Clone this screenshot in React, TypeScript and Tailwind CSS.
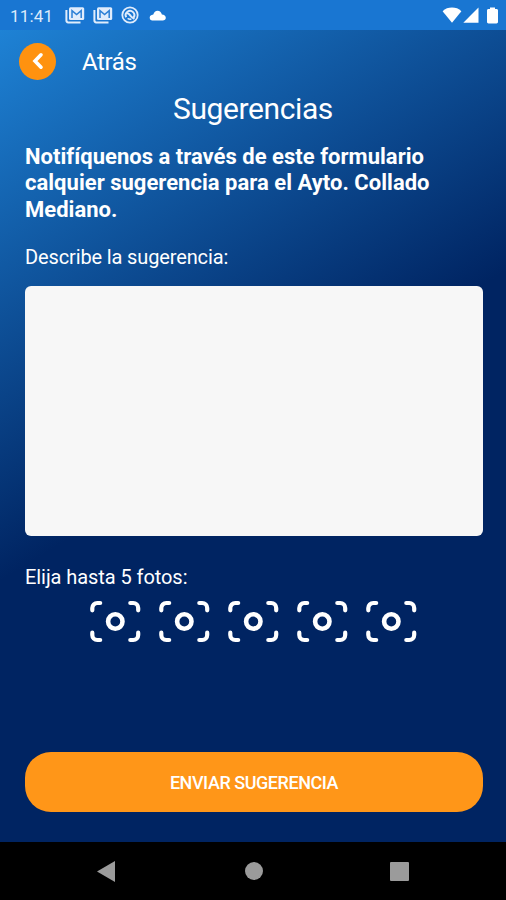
import React, { useState } from 'react';
import { clsx } from 'clsx';

const PHOTO_SLOTS = [1, 2, 3, 4, 5];

function MailIcon() {
  return (
    <svg viewBox="0 0 20 18" className="w-5 h-[18px]" fill="none">
      <path d="M1.4 4v10.600c0 1.100.7 1.800 1.800 1.800H15.500" stroke="#e0ecfc" strokeWidth="2" />
      <rect x="4" y="1.200" width="15.200" height="12.800" rx="1.500" fill="#e0ecfc" />
      <path d="M7 12V4.600l4.600 3.900 4.600-3.900V12" stroke="#2d80d6" strokeWidth="1.500" />
    </svg>
  );
}

function CircleIcon() {
  return (
    <svg viewBox="0 0 18 18" className="w-[18px] h-[18px]" fill="none" stroke="#e0ecfc">
      <circle cx="9" cy="9" r="7.700" strokeWidth="1.800" />
      <path d="M5.200 11.200a4.300 4.300 0 1 1 7.200.6" strokeWidth="2" />
      <path d="M5.800 7.200c2.400-.6 3.200 2.200 4.400 3.400 1 1 2 1.600 3.200 2.200" strokeWidth="2" />
      <path d="M6.600 12.400c1.200.8 2.400 1 3.800.6" strokeWidth="1.400" />
    </svg>
  );
}

function CloudIcon() {
  return (
    <svg viewBox="0 0 17 11" className="ml-[2px] w-[17px] h-[11px]" fill="#fff">
      <path d="M3 10.600a2.900 2.900 0 0 1-.4-5.600c.7-.2 1.300-.2 1.700-.4C5 2.200 6.500.7 8.500.7c2.300 0 3.800 1.600 4.400 3.900 2.300.2 3.900 1.400 3.900 3.200 0 1.700-1.300 2.800-3 2.800z" />
    </svg>
  );
}

function StatusBar() {
  return (
    <div className="flex h-[30px] shrink-0 items-center bg-[#1976d2] pl-[10px] pr-[8px] text-white">
      <span className="w-[55px] pt-[2px] text-[17px] leading-none tracking-[0.2px] text-[#dceafb]">
        11:41
      </span>
      <div className="flex items-center gap-[8px]">
        <MailIcon />
        <MailIcon />
        <CircleIcon />
        <CloudIcon />
      </div>
      <div className="ml-auto flex items-center">
        <svg viewBox="0 0 20 16" className="w-5 h-4" fill="#fff">
          <path d="M10 15.800.6 4.200C3.200 1.700 6.400.6 10 .6s6.800 1.100 9.400 3.600z" />
        </svg>
        <svg viewBox="0 0 16 16" className="ml-px w-4 h-4" fill="#fff">
          <path d="M15.500.4v15.400H.3z" />
        </svg>
        <svg viewBox="0 0 11 17" className="ml-[8px] w-[11px] h-[17px]" fill="#fff">
          <path d="M3 .500h5v1.500h1.500c.8 0 1.500.6 1.500 1.400v11.700c0 .8-.7 1.400-1.500 1.400h-8c-.8 0-1.500-.6-1.500-1.400V3.400C0 2.600.7 2 1.500 2H3z" />
        </svg>
      </div>
    </div>
  );
}

function PhotoSlot({ slot }: { slot: number }) {
  return (
    <button type="button" aria-label={`Foto ${slot}`}>
      <svg
        viewBox="0 0 52 43"
        className="w-[52px] h-[43px]"
        fill="none"
        stroke="#fff"
        strokeWidth="4.200"
        strokeLinecap="round"
      >
        <path d="M3.300 10.300V8a5 5 0 0 1 5-5h2.900" />
        <path d="M41.300 3h2.900a5 5 0 0 1 5 5v2.300" />
        <path d="M3.300 32.700V35a5 5 0 0 0 5 5h2.900" />
        <path d="M41.300 40h2.900a5 5 0 0 0 5-5v-2.300" />
        <circle cx="26.300" cy="21.500" r="7.200" strokeWidth="4.600" />
      </svg>
    </button>
  );
}

function NavigationBar() {
  return (
    <div className="flex h-[58px] shrink-0 items-center bg-black pl-[97px]">
      <svg viewBox="0 0 18 21" className="w-[18px] h-[21px]" fill="#9b9b9b">
        <path d="M18 0v21L0 10.500z" />
      </svg>
      <div className="ml-[130px] size-[18px] rounded-full bg-[#9b9b9b]" />
      <div className="ml-[127px] size-[19px] rounded-[1px] bg-[#9b9b9b]" />
    </div>
  );
}

export default function App() {
  const [text, setText] = useState('');

  return (
    <div className="flex h-[900px] w-[506px] flex-col overflow-hidden font-[Roboto,sans-serif] text-white">
      <StatusBar />

      <main
        className={clsx(
          'flex flex-1 flex-col',
          'bg-[linear-gradient(148.500deg,#1e82d5_0px,#002462_470px)]'
        )}
      >
        {/* Back navigation */}
        <header className="flex h-[62px] items-center pl-[19px]">
          <button
            type="button"
            aria-label="Atrás"
            className="flex size-[37px] items-center justify-center rounded-full bg-[#ff920f]"
          >
            <svg viewBox="0 0 12 18" className="w-3 h-[18px]" fill="none">
              <path d="M9 2.800 3 9l6 6.200" stroke="#fff" strokeWidth="3.600" strokeLinecap="round" />
            </svg>
          </button>
          <span className="ml-[26px] pt-[2px] text-[24px] leading-none tracking-[-0.4px]">Atrás</span>
        </header>

        <h1 className="text-center text-[30px] leading-[34px] tracking-[-0.4px]">Sugerencias</h1>

        <div className="flex flex-1 flex-col px-[25px]">
          <p className="mt-[18px] text-[22px] font-bold leading-[26.300px] tracking-[0.02px]">
            Notifíquenos a través de este formulario calquier sugerencia para el Ayto. Collado Mediano.
          </p>

          <label
            htmlFor="suggestion"
            className="mt-[22px] text-[20px] leading-[24px] tracking-[-0.130px]"
          >
            Describe la sugerencia:
          </label>
          <textarea
            id="suggestion"
            value={text}
            onChange={(e) => setText(e.target.value)}
            className="mt-[17px] h-[250px] w-[458px] resize-none rounded-[6px] bg-[#f7f7f7] p-3 text-[20px] text-black outline-none"
          />

          <p className="mt-[29px] text-[20px] leading-[24px] tracking-[-0.070px]">
            Elija hasta 5 fotos:
          </p>
          <div className="mt-[11px] flex justify-center gap-[17px]">
            {PHOTO_SLOTS.map((slot) => (
              <PhotoSlot key={slot} slot={slot} />
            ))}
          </div>

          <button
            type="button"
            className="mt-auto mb-[30px] h-[60px] w-[458px] rounded-[26px] bg-[#ff9618] text-[18px] font-medium tracking-[-0.450px]"
          >
            ENVIAR SUGERENCIA
          </button>
        </div>
      </main>

      <NavigationBar />
    </div>
  );
}
